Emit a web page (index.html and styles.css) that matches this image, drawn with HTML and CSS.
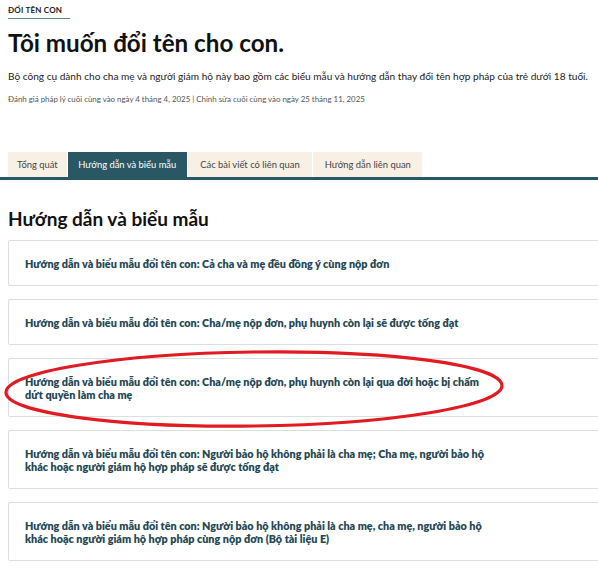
FILE: index.html
```html
<!DOCTYPE html>
<html lang="vi">
<head>
<meta charset="utf-8">
<title>Tôi muốn đổi tên cho con.</title>
<link rel="stylesheet" href="styles.css">
</head>
<body>
<div class="page">
  <header class="head">
    <div class="kicker">ĐỔI TÊN CON</div>
    <h1 class="title">Tôi muốn đổi tên cho con.</h1>
    <p class="desc">Bộ công cụ dành cho cha mẹ và người giám hộ này bao gồm các biểu mẫu và hướng dẫn thay đổi tên hợp pháp của trẻ dưới 18 tuổi.</p>
    <p class="meta">Đánh giá pháp lý cuối cùng vào ngày 4 tháng 4, 2025 | Chỉnh sửa cuối cùng vào ngày 25 tháng 11, 2025</p>
  </header>
  <nav class="tabs">
    <span class="tab">Tổng quát</span>
    <span class="tab active">Hướng dẫn và biểu mẫu</span>
    <span class="tab">Các bài viết có liên quan</span>
    <span class="tab">Hướng dẫn liên quan</span>
  </nav>
  <main class="content">
    <h2 class="section">Hướng dẫn và biểu mẫu</h2>
    <div class="cards">
      <a class="card"><span>Hướng dẫn và biểu mẫu đổi tên con: Cả cha và mẹ đều đồng ý cùng nộp đơn</span></a>
      <a class="card"><span>Hướng dẫn và biểu mẫu đổi tên con: Cha/mẹ nộp đơn, phụ huynh còn lại sẽ được tống đạt</span></a>
      <a class="card"><span>Hướng dẫn và biểu mẫu đổi tên con: Cha/mẹ nộp đơn, phụ huynh còn lại qua đời hoặc bị chấm dứt quyền làm cha mẹ</span></a>
      <a class="card"><span>Hướng dẫn và biểu mẫu đổi tên con: Người bảo hộ không phải là cha mẹ; Cha mẹ, người bảo hộ khác hoặc người giám hộ hợp pháp sẽ được tống đạt</span></a>
      <a class="card"><span>Hướng dẫn và biểu mẫu đổi tên con: Người bảo hộ không phải là cha mẹ, cha mẹ, người bảo hộ khác hoặc người giám hộ hợp pháp cùng nộp đơn (Bộ tài liệu E)</span></a>
    </div>
  </main>
  <svg class="mark" width="598" height="578" viewBox="0 0 598 578" aria-hidden="true">
    <ellipse cx="254" cy="389" rx="248" ry="37" transform="rotate(-0.8 254 389)" fill="none" stroke="#e11b22" stroke-width="3.2"/>
  </svg>
</div>
</body>
</html>
```

FILE: styles.css
```css
html, body {
  margin: 0;
  padding: 0;
  background: #fff;
  overflow: hidden;
}
body {
  font-family: Lato, "Noto Sans", "Liberation Sans", sans-serif;
  color: #111;
  line-height: 1.2;
}
.page {
  position: relative;
  width: 598px;
  height: 578px;
  overflow: hidden;
}
.head {
  padding: 5px 8px 0;
}
.kicker {
  display: block;
  width: 62px;
  font-size: 8px;
  line-height: 10px;
  font-weight: 700;
  letter-spacing: 0.2px;
  color: #222;
  padding-bottom: 3px;
  border-bottom: 1.5px solid #5f8a84;
  white-space: nowrap;
}
.title {
  margin: 9px 0 0;
  font-size: 24.2px;
  line-height: 30px;
  font-weight: 700;
  color: #111;
}
.desc {
  margin: 11px 0 0;
  font-size: 10.1px;
  line-height: 14px;
  color: #222;
  white-space: nowrap;
}
.meta {
  margin: 11px 0 0;
  font-size: 7.9px;
  line-height: 10px;
  color: #555;
}
.tabs {
  display: flex;
  gap: 1px;
  margin-top: 48px;
  padding-left: 8px;
  border-bottom: 3px solid #2a5764;
}
.tab {
  height: 25px;
  display: flex;
  align-items: center;
  padding: 0 9px;
  background: #f8f0e5;
  font-size: 9.4px;
  color: #444;
  white-space: nowrap;
}
.tab:nth-child(2) { padding: 0 10.5px; }
.tab:nth-child(3) { padding: 0 12.5px; }
.tab:nth-child(4) { padding: 0 11.5px; }
.tab.active {
  background: #2a5764;
  color: #fff;
}
.content {
  padding: 0 8px;
}
.section {
  margin: 27px 0 0;
  font-size: 19px;
  line-height: 24px;
  font-weight: 700;
  color: #111;
}
.cards {
  display: flex;
  flex-direction: column;
  gap: 13px;
  margin-top: 9px;
  margin-right: -30px;
}
.card {
  display: block;
  border: 1px solid #d9e0de;
  border-radius: 2px;
  padding: 15.5px 16px;
  font-size: 10.8px;
  line-height: 13px;
  font-weight: 800;
  color: #264856;
}
.card span {
  display: block;
  max-width: 462px;
}
.mark {
  position: absolute;
  left: 0;
  top: 0;
  pointer-events: none;
}
```
